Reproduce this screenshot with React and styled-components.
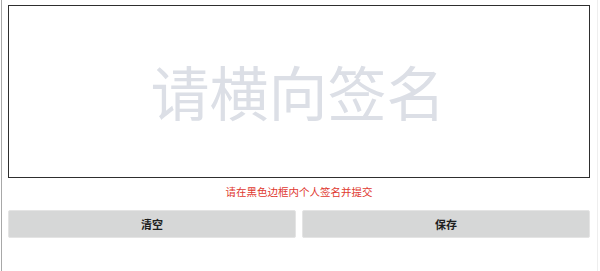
import React from "react";
import styled, { createGlobalStyle } from "styled-components";

const Global = createGlobalStyle`
  html, body { margin: 0; padding: 0; background: #fff; }
  body { font-family: "Noto Sans CJK SC", "Noto Sans", sans-serif; }
`;

const Page = styled.div`
  box-sizing: border-box;
  margin-left: 1px;
  width: 597px;
  height: 271px;
  border-left: 1px solid #a8a8a8;
  border-right: 1px solid #eeeeee;
  padding: 5px 6px 0 6px;
  display: flex;
  flex-direction: column;
`;

const Canvas = styled.div`
  box-sizing: border-box;
  width: 582px;
  height: 173px;
  border: 1.5px solid #2e2e2e;
  display: flex;
  align-items: center;
  justify-content: center;
`;

const Placeholder = styled.span`
  font-size: 59px;
  line-height: 1;
  color: #dcdfe6;
  margin-top: -2px;
  margin-left: -2px;
`;

const Hint = styled.div`
  margin-top: 7px;
  height: 14px;
  line-height: 14px;
  font-size: 10.5px;
  color: #e0392f;
  text-align: center;
  width: 582px;
`;

const Actions = styled.div`
  margin-top: 11px;
  display: grid;
  grid-template-columns: 1fr 1fr;
  gap: 6px;
  width: 582px;
`;

const Button = styled.button`
  box-sizing: border-box;
  height: 28px;
  background: #d6d7d7;
  border: 1px solid #e4e4e4;
  border-radius: 2px;
  font-family: "Noto Sans CJK SC", sans-serif;
  font-size: 11px;
  font-weight: 600;
  color: #1e1e1e;
  padding: 0;
  cursor: pointer;
`;

export default function App() {
  return (
    <>
      <Global />
      <Page>
        <Canvas>
          <Placeholder>请横向签名</Placeholder>
        </Canvas>
        <Hint>请在黑色边框内个人签名并提交</Hint>
        <Actions>
          <Button>清空</Button>
          <Button>保存</Button>
        </Actions>
      </Page>
    </>
  );
}
